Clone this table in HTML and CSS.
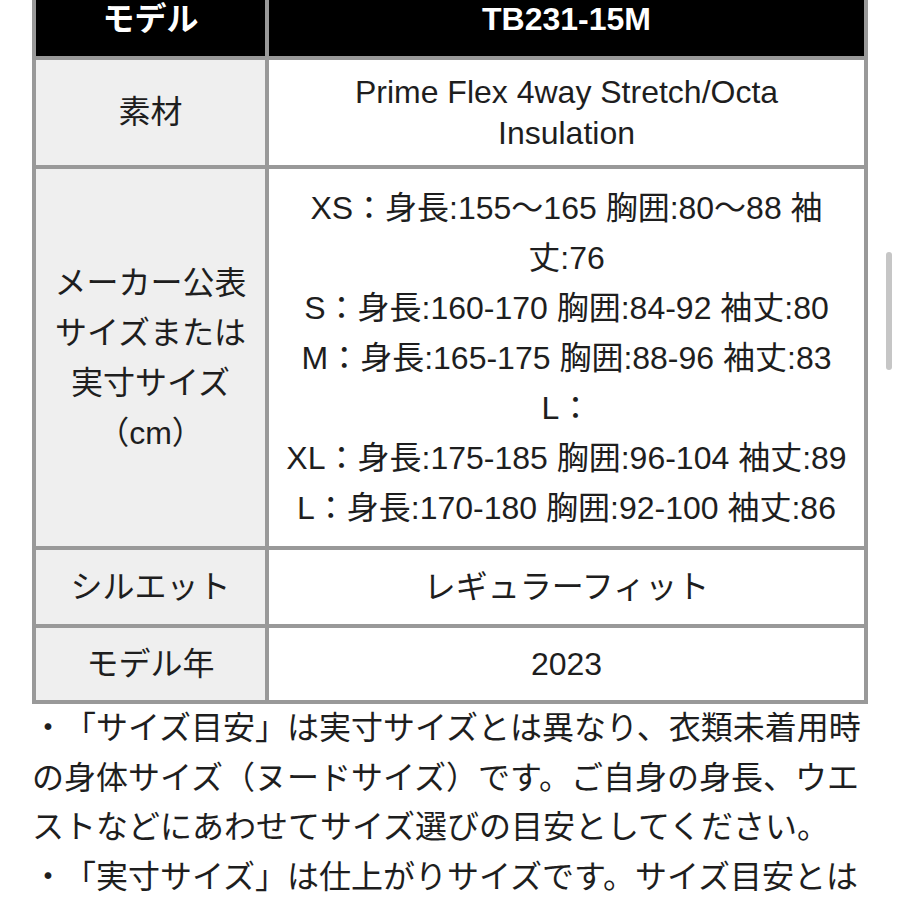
FILE: index.html
```
<!DOCTYPE html>
<html lang="ja">
<head>
<meta charset="utf-8">
<title>TB231-15M</title>
<link rel="stylesheet" href="styles.css">
</head>
<body>
<div class="page">
  <table class="spec">
    <tr class="row-head">
      <th class="label">モデル</th>
      <th class="value">TB231-15M</th>
    </tr>
    <tr class="row-material">
      <td class="label">素材</td>
      <td class="value">Prime Flex 4way Stretch/Octa Insulation</td>
    </tr>
    <tr class="row-size">
      <td class="label">メーカー公表サイズまたは実寸サイズ（cm）</td>
      <td class="value">XS：身長:155～165 胸囲:80～88 袖丈:76<br>S：身長:160-170 胸囲:84-92 袖丈:80<br>M：身長:165-175 胸囲:88-96 袖丈:83<br>L：<br>XL：身長:175-185 胸囲:96-104 袖丈:89<br>L：身長:170-180 胸囲:92-100 袖丈:86</td>
    </tr>
    <tr class="row-fit">
      <td class="label">シルエット</td>
      <td class="value">レギュラーフィット</td>
    </tr>
    <tr class="row-year">
      <td class="label">モデル年</td>
      <td class="value">2023</td>
    </tr>
  </table>
  <div class="notes">
    <p>・「サイズ目安」は実寸サイズとは異なり、衣類未着用時の身体サイズ（ヌードサイズ）です。ご自身の身長、ウエストなどにあわせてサイズ選びの目安としてください。</p>
    <p>・「実寸サイズ」は仕上がりサイズです。サイズ目安とは</p>
  </div>
  <div class="scroll-indicator"></div>
</div>
</body>
</html>
```
FILE: styles.css
```
* {
  box-sizing: border-box;
}

html, body {
  margin: 0;
  padding: 0;
  background: #ffffff;
  overflow: hidden;
}

body {
  width: 900px;
  height: 900px;
  font-family: "Liberation Sans", "Noto Sans CJK JP", sans-serif;
  color: #1e1e1e;
  text-spacing-trim: space-all;
}

.page {
  position: relative;
  width: 900px;
  height: 900px;
  padding-left: 32px;
}

.spec {
  margin-top: -22px;
  width: 836px;
  border-collapse: separate;
  border-spacing: 0;
  border-top: 4px solid #999999;
  border-left: 4px solid #999999;
  font-size: 32px;
  line-height: 50px;
  text-align: center;
}

.spec th,
.spec td {
  padding: 12px 15px;
  border-right: 4px solid #999999;
  border-bottom: 4px solid #999999;
  vertical-align: middle;
  font-weight: normal;
}

.spec .label {
  width: 233px;
  background: #efefef;
}

.spec .value {
  background: #ffffff;
}

.row-head th {
  font-weight: bold;
  color: #ffffff;
}

.row-head th.label,
.row-head th.value {
  background: #000000;
}

.row-material td {
  line-height: 40.5px;
}

.row-size td {
  padding-top: 13.5px;
  padding-bottom: 13.5px;
}

.row-year td {
  padding-top: 11px;
  padding-bottom: 11px;
}

.notes {
  width: 836px;
  font-size: 32px;
  line-height: 49.5px;
}

.notes p {
  margin: 0;
}

.scroll-indicator {
  position: absolute;
  left: 886px;
  top: 274px;
  width: 6px;
  height: 118px;
  border-radius: 3px;
  background: #c6c6c6;
}
```
